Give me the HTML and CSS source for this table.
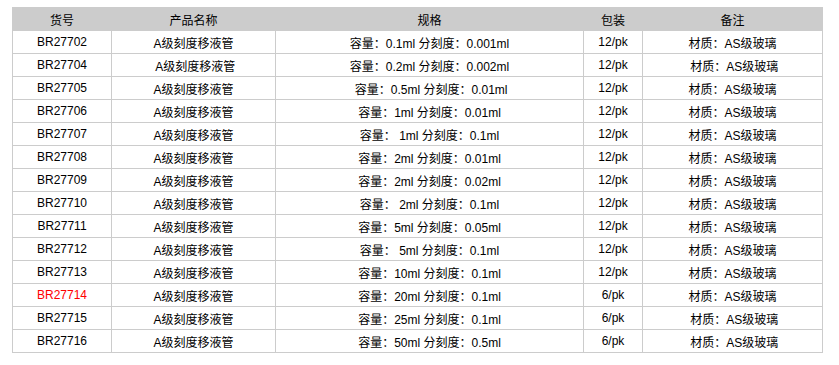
FILE: index.html
```html
<!DOCTYPE html>
<html lang="zh">
    <head>
        <meta charset="UTF-8" />
        <meta name="viewport" content="width=device-width, initial-scale=1.0" />
        <title>A级刻度移液管</title>
        <link rel="stylesheet" href="styles.css">
    </head>
    <body>
        <div class="wrap">
            <table class="product-table">
                <colgroup>
                    <col class="c-code">
                    <col class="c-name">
                    <col class="c-spec">
                    <col class="c-pack">
                    <col class="c-note">
                </colgroup>
                <thead>
                    <tr>
                        <th>货号</th>
                        <th>产品名称</th>
                        <th>规格</th>
                        <th>包装</th>
                        <th>备注</th>
                    </tr>
                </thead>
                <tbody>
                    <tr><td>BR27702</td><td>A级刻度移液管</td><td>容量：0.1ml 分刻度：0.001ml</td><td>12/pk</td><td>材质：AS级玻璃</td></tr>
                    <tr><td>BR27704</td><td>&nbsp;A级刻度移液管</td><td>容量：0.2ml 分刻度：0.002ml</td><td>12/pk</td><td>&nbsp;材质：AS级玻璃</td></tr>
                    <tr><td>BR27705</td><td>A级刻度移液管</td><td>&nbsp;容量：0.5ml 分刻度：0.01ml</td><td>12/pk</td><td>材质：AS级玻璃</td></tr>
                    <tr><td>BR27706</td><td>A级刻度移液管</td><td>容量：1ml 分刻度：0.01ml</td><td>12/pk</td><td>材质：AS级玻璃</td></tr>
                    <tr><td>BR27707</td><td>A级刻度移液管</td><td>容量：&nbsp;1ml 分刻度：0.1ml</td><td>12/pk</td><td>材质：AS级玻璃</td></tr>
                    <tr><td>BR27708</td><td>A级刻度移液管</td><td>容量：2ml 分刻度：0.01ml</td><td>12/pk</td><td>材质：AS级玻璃</td></tr>
                    <tr><td>BR27709</td><td>A级刻度移液管</td><td>容量：2ml 分刻度：0.02ml</td><td>12/pk</td><td>材质：AS级玻璃</td></tr>
                    <tr><td>BR27710</td><td>A级刻度移液管</td><td>容量：&nbsp;2ml 分刻度：0.1ml</td><td>12/pk</td><td>材质：AS级玻璃</td></tr>
                    <tr><td>BR27711</td><td>A级刻度移液管</td><td>容量：5ml 分刻度：0.05ml</td><td>12/pk</td><td>材质：AS级玻璃</td></tr>
                    <tr><td>BR27712</td><td>A级刻度移液管</td><td>容量：&nbsp;5ml 分刻度：0.1ml</td><td>12/pk</td><td>材质：AS级玻璃</td></tr>
                    <tr><td>BR27713</td><td>A级刻度移液管</td><td>容量：10ml 分刻度：0.1ml</td><td>12/pk</td><td>材质：AS级玻璃</td></tr>
                    <tr><td class="hot">BR27714</td><td>A级刻度移液管</td><td>容量：20ml 分刻度：0.1ml</td><td>6/pk</td><td>材质：AS级玻璃</td></tr>
                    <tr><td>BR27715</td><td>A级刻度移液管</td><td>容量：25ml 分刻度：0.1ml</td><td>6/pk</td><td>&nbsp;材质：AS级玻璃</td></tr>
                    <tr><td>BR27716</td><td>A级刻度移液管</td><td>容量：50ml 分刻度：0.5ml</td><td>6/pk</td><td>&nbsp;材质：AS级玻璃</td></tr>
                </tbody>
            </table>
        </div>
    </body>
</html>
```

FILE: styles.css
```css
* {
    margin: 0;
    padding: 0;
    box-sizing: border-box;
}

body {
    background: #fff;
    font-family: "Liberation Sans", Arial, "Noto Sans CJK SC", sans-serif;
    font-size: 12px;
    color: #000;
}

.wrap {
    padding: 7px 0 0 12px;
}

.product-table {
    width: 810px;
    border-collapse: collapse;
    table-layout: fixed;
}

.c-code { width: 99px; }
.c-name { width: 164px; }
.c-spec { width: 308px; }
.c-pack { width: 59px; }
.c-note { width: 180px; }

.product-table th {
    background: #ccc;
    border: 1px solid #ccc;
    height: 23px;
    font-weight: normal;
    font-size: 12px;
    text-align: center;
    vertical-align: middle;
}

.product-table td {
    border: 1px solid #ccc;
    height: 23px;
    text-align: center;
    vertical-align: middle;
    white-space: nowrap;
}

.product-table td.hot {
    color: #f00;
}
```
